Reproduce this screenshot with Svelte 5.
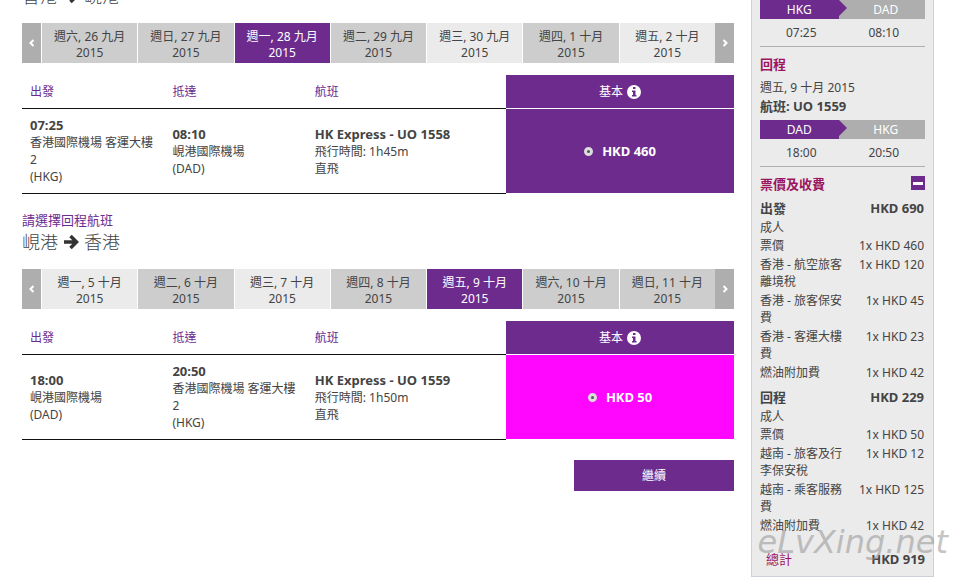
<script lang="ts">
	type Tone = 'dark' | 'light' | 'selected';

	interface Leg {
		id: string;
		label: string;
		from: string;
		to: string;
		days: { label: string; tone: Tone }[];
		depart: { time: string; airport: string; code: string };
		arrive: { time: string; airport: string; code: string };
		flight: string;
		duration: string;
		price: string;
		highlight: boolean;
	}

	const legs: Leg[] = [
		{
			id: 'outbound',
			label: '請選擇去程航班',
			from: '香港',
			to: '峴港',
			days: [
				{ label: '週六, 26 九月', tone: 'dark' },
				{ label: '週日, 27 九月', tone: 'dark' },
				{ label: '週一, 28 九月', tone: 'selected' },
				{ label: '週二, 29 九月', tone: 'dark' },
				{ label: '週三, 30 九月', tone: 'light' },
				{ label: '週四, 1 十月', tone: 'dark' },
				{ label: '週五, 2 十月', tone: 'light' }
			],
			depart: { time: '07:25', airport: '香港國際機場 客運大樓 2', code: 'HKG' },
			arrive: { time: '08:10', airport: '峴港國際機場', code: 'DAD' },
			flight: 'UO 1558',
			duration: '1h45m',
			price: 'HKD 460',
			highlight: false
		},
		{
			id: 'return',
			label: '請選擇回程航班',
			from: '峴港',
			to: '香港',
			days: [
				{ label: '週一, 5 十月', tone: 'light' },
				{ label: '週二, 6 十月', tone: 'dark' },
				{ label: '週三, 7 十月', tone: 'light' },
				{ label: '週四, 8 十月', tone: 'dark' },
				{ label: '週五, 9 十月', tone: 'selected' },
				{ label: '週六, 10 十月', tone: 'dark' },
				{ label: '週日, 11 十月', tone: 'dark' }
			],
			depart: { time: '18:00', airport: '峴港國際機場', code: 'DAD' },
			arrive: { time: '20:50', airport: '香港國際機場 客運大樓 2', code: 'HKG' },
			flight: 'UO 1559',
			duration: '1h50m',
			price: 'HKD 50',
			highlight: true
		}
	];

	const trips = [
		{ title: '出發', date: '週一, 28 九月 2015', leg: legs[0] },
		{ title: '回程', date: '週五, 9 十月 2015', leg: legs[1] }
	];

	const fees = [
		{
			title: '出發',
			total: 'HKD 690',
			items: [
				['票價', '1x HKD 460'],
				['香港 - 航空旅客離境稅', '1x HKD 120'],
				['香港 - 旅客保安費', '1x HKD 45'],
				['香港 - 客運大樓費', '1x HKD 23'],
				['燃油附加費', '1x HKD 42']
			]
		},
		{
			title: '回程',
			total: 'HKD 229',
			items: [
				['票價', '1x HKD 50'],
				['越南 - 旅客及行李保安稅', '1x HKD 12'],
				['越南 - 乘客服務費', '1x HKD 125'],
				['燃油附加費', '1x HKD 42']
			]
		}
	];

	let feesOpen = $state(true);
</script>

<div class="page">
	<main class="flights">
		{#each legs as leg (leg.id)}
			<section class="leg">
				<p class="leg-label">{leg.label}</p>
				<h2 class="leg-title">
					{leg.from}
					<svg class="leg-arrow" viewBox="0 0 16 16" aria-hidden="true">
						<path d="M1 8h12M7.5 2l6 6-6 6" fill="none" stroke="currentColor" stroke-width="3.5" />
					</svg>
					{leg.to}
				</h2>

				<div class="date-strip">
					<button class="nav" type="button" aria-label="較早日期">
						<svg viewBox="0 0 8 10" aria-hidden="true"><path d="M5.500 2l-3 3 3 3" /></svg>
					</button>
					<div class="days">
						{#each leg.days as day}
							<button class="day {day.tone}" type="button">{day.label}<br />2015</button>
						{/each}
					</div>
					<button class="nav" type="button" aria-label="較晚日期">
						<svg viewBox="0 0 8 10" aria-hidden="true"><path d="M2.500 2l3 3-3 3" /></svg>
					</button>
				</div>

				<table class="flight-table">
					<thead>
						<tr>
							<th class="col-airport">出發</th>
							<th class="col-airport">抵達</th>
							<th class="col-flight">航班</th>
							<th class="fare-head">
								<span class="fare-name">
									基本
									<svg class="info" viewBox="0 0 14 14" aria-hidden="true">
										<circle cx="7" cy="7" r="7" fill="#fff" />
										<path d="M6 2h2.500v2H6zM5 5.500h3.500V10h1v1.500H5V10h1V7H5z" fill="#6d2b8e" />
									</svg>
								</span>
							</th>
						</tr>
					</thead>
					<tbody>
						<tr>
							<td><strong>{leg.depart.time}</strong><br />{leg.depart.airport}<br />({leg.depart.code})</td>
							<td><strong>{leg.arrive.time}</strong><br />{leg.arrive.airport}<br />({leg.arrive.code})</td>
							<td><strong>HK Express - {leg.flight}</strong><br />飛行時間: {leg.duration}<br />直飛</td>
							<td class="fare" class:highlight={leg.highlight}>
								<label class="fare-option">
									<input type="radio" name={leg.id} value={leg.price} checked />
									{leg.price}
								</label>
							</td>
						</tr>
					</tbody>
				</table>
			</section>
		{/each}

		<button class="continue" type="button">繼續</button>
	</main>

	<aside class="summary">
		{#each trips as trip}
			<section class="trip">
				<h3 class="summary-title">{trip.title}</h3>
				<p class="trip-date">{trip.date}</p>
				<p class="trip-flight">航班: {trip.leg.flight}</p>
				<div class="route">
					<span class="route-from">{trip.leg.depart.code}</span>
					<svg class="route-tip" viewBox="0 0 8 16" aria-hidden="true"><path d="M0 0l8 8-8 8z" fill="#6d2b8e" /></svg>
					<span class="route-to">{trip.leg.arrive.code}</span>
				</div>
				<div class="times">
					<span>{trip.leg.depart.time}</span>
					<span>{trip.leg.arrive.time}</span>
				</div>
			</section>
		{/each}

		<div class="fees-head">
			<h3 class="summary-title">票價及收費</h3>
			<button class="toggle" type="button" aria-label="收起" onclick={() => (feesOpen = !feesOpen)}>
				<span class="toggle-bar"></span>
			</button>
		</div>

		{#if feesOpen}
			{#each fees as group}
				<table class="fees">
					<thead>
						<tr>
							<th class="fee-name">{group.title}</th>
							<th class="amount">{group.total}</th>
						</tr>
					</thead>
					<tbody>
						<tr class="passenger"><td colspan="2">成人</td></tr>
						{#each group.items as [name, amount]}
							<tr>
								<td>{name}</td>
								<td class="amount">{amount}</td>
							</tr>
						{/each}
					</tbody>
				</table>
			{/each}
		{/if}

		<div class="total">
			<span class="total-label">總計</span>
			<strong>HKD 919</strong>
		</div>

		<span class="watermark">eLvXing.net</span>
	</aside>
</div>

<style>
	:global(body) {
		margin: 0;
		background: #fff;
	}
	.page {
		display: flex;
		align-items: flex-start;
		gap: 17px;
		padding: 0 25px 0 22px;
		font-family: 'Noto Sans', 'Noto Sans CJK TC', sans-serif;
		font-size: 12px;
		line-height: 17px;
		color: #444;
	}
	p,
	h2,
	h3 {
		margin: 0;
	}
	button {
		margin: 0;
		padding: 0;
		border: 0;
		font: inherit;
		cursor: pointer;
	}
	strong {
		font-size: 13px;
	}

	/* Flight selection */
	.flights {
		flex: 1;
		min-width: 0;
		display: flex;
		flex-direction: column;
		margin-top: -34px;
	}
	.leg {
		margin-bottom: 18px;
	}
	.leg-label {
		font-size: 13px;
		color: #6d2b8e;
	}
	.leg-title {
		display: flex;
		align-items: center;
		gap: 5px;
		margin-bottom: 14px;
		font-size: 18px;
		line-height: 26px;
		font-weight: 300;
	}
	.leg-arrow {
		width: 16px;
		height: 16px;
		color: #333;
	}

	.date-strip {
		display: flex;
		height: 40px;
		margin-bottom: 12px;
	}
	.nav {
		display: flex;
		align-items: center;
		justify-content: center;
		width: 19px;
		background: #aeaeae;
	}
	.nav svg {
		width: 8px;
		height: 10px;
		fill: none;
		stroke: #fff;
		stroke-width: 2;
	}
	.days {
		flex: 1;
		display: flex;
		gap: 1px;
		padding-left: 1px;
	}
	.day {
		flex: 1;
		padding-top: 3px;
		line-height: 16px;
		color: #444;
	}
	.day.dark {
		background: #cdcdcd;
	}
	.day.light {
		background: #ebebeb;
	}
	.day.selected {
		background: #6d2b8e;
		color: #fff;
	}

	.flight-table {
		width: 100%;
		table-layout: fixed;
		border-spacing: 0;
	}
	.flight-table th,
	.flight-table td {
		padding: 8px;
		border-bottom: 1px solid #111;
		text-align: left;
		vertical-align: middle;
	}
	.flight-table th {
		font-weight: 400;
		color: #6d2b8e;
	}
	.flight-table .col-airport {
		width: 20%;
		box-sizing: border-box;
	}
	.flight-table .col-flight {
		width: 28%;
		box-sizing: border-box;
	}
	.flight-table .fare-head {
		background: #6d2b8e;
		border-color: #fff;
		background-clip: padding-box;
		color: #fff;
	}
	.fare-name {
		display: flex;
		align-items: center;
		justify-content: center;
		gap: 4px;
	}
	.info {
		width: 14px;
		height: 14px;
	}
	.flight-table .fare {
		background: #6d2b8e;
		background-clip: padding-box;
		border-color: #fff;
		color: #fff;
	}
	.flight-table .fare.highlight {
		background-color: #ff06ff;
	}
	.fare-option {
		display: flex;
		align-items: center;
		justify-content: center;
		gap: 9px;
		font-size: 13px;
		font-weight: 700;
	}
	.fare-option input {
		appearance: none;
		width: 9px;
		height: 9px;
		margin: 0;
		box-sizing: border-box;
		border: 3px solid #ddd;
		border-radius: 50%;
		background: #555;
	}

	.continue {
		align-self: flex-end;
		width: 160px;
		height: 31px;
		margin-top: 2px;
		background: #6d2b8e;
		color: #fff;
	}

	/* Booking summary */
	.summary {
		position: relative;
		box-sizing: border-box;
		width: 183px;
		margin-top: -74px;
		padding: 0 8px 8px;
		border: 1px solid #cbd0da;
		background: #ebebeb;
	}
	.trip {
		padding-top: 9px;
		border-bottom: 1px solid #aeaeae;
	}
	.summary-title {
		font-size: 13px;
		line-height: 17px;
		color: #9b1560;
	}
	.trip-date {
		margin: 6px 0 2px;
	}
	.trip-flight {
		margin-bottom: 5px;
		font-size: 13px;
		font-weight: 700;
	}
	.route {
		display: flex;
		background: #aeaeae;
		line-height: 19px;
		color: #fff;
		text-align: center;
	}
	.route-from {
		flex: 1;
		background: #6d2b8e;
	}
	.route-to {
		flex: 1;
	}
	.route-tip {
		width: 8px;
		height: 16px;
	}
	.times {
		display: flex;
		padding: 5px 0;
		text-align: center;
	}
	.times span {
		flex: 1;
	}

	.fees-head {
		display: flex;
		justify-content: space-between;
		padding: 9px 0 6px;
	}
	.toggle {
		width: 14px;
		height: 14px;
		background: #6d2b8e;
	}
	.toggle-bar {
		display: block;
		width: 10px;
		height: 3px;
		margin: 0 auto;
		background: #fff;
	}
	.fees {
		width: 100%;
		table-layout: fixed;
		border-spacing: 0;
		margin-bottom: 6px;
	}
	.fees th,
	.fees td {
		padding: 1px 0;
		text-align: left;
		vertical-align: top;
	}
	.fees .passenger td {
		padding-bottom: 0;
	}
	.fees th {
		font-size: 13px;
	}
	.fees .fee-name {
		width: 55%;
	}
	.fees .amount {
		padding-right: 1px;
		text-align: right;
	}
	.total {
		display: flex;
		justify-content: space-between;
		padding: 10px 0 0 6px;
	}
	.total-label {
		font-size: 13px;
		color: #9b1560;
	}
	.watermark {
		position: absolute;
		right: -15px;
		bottom: 14px;
		font-family: 'DejaVu Sans', sans-serif;
		font-size: 32px;
		line-height: 40px;
		font-style: italic;
		font-weight: 200;
		color: #8c8c8c;
		opacity: 0.5;
		pointer-events: none;
	}
</style>
